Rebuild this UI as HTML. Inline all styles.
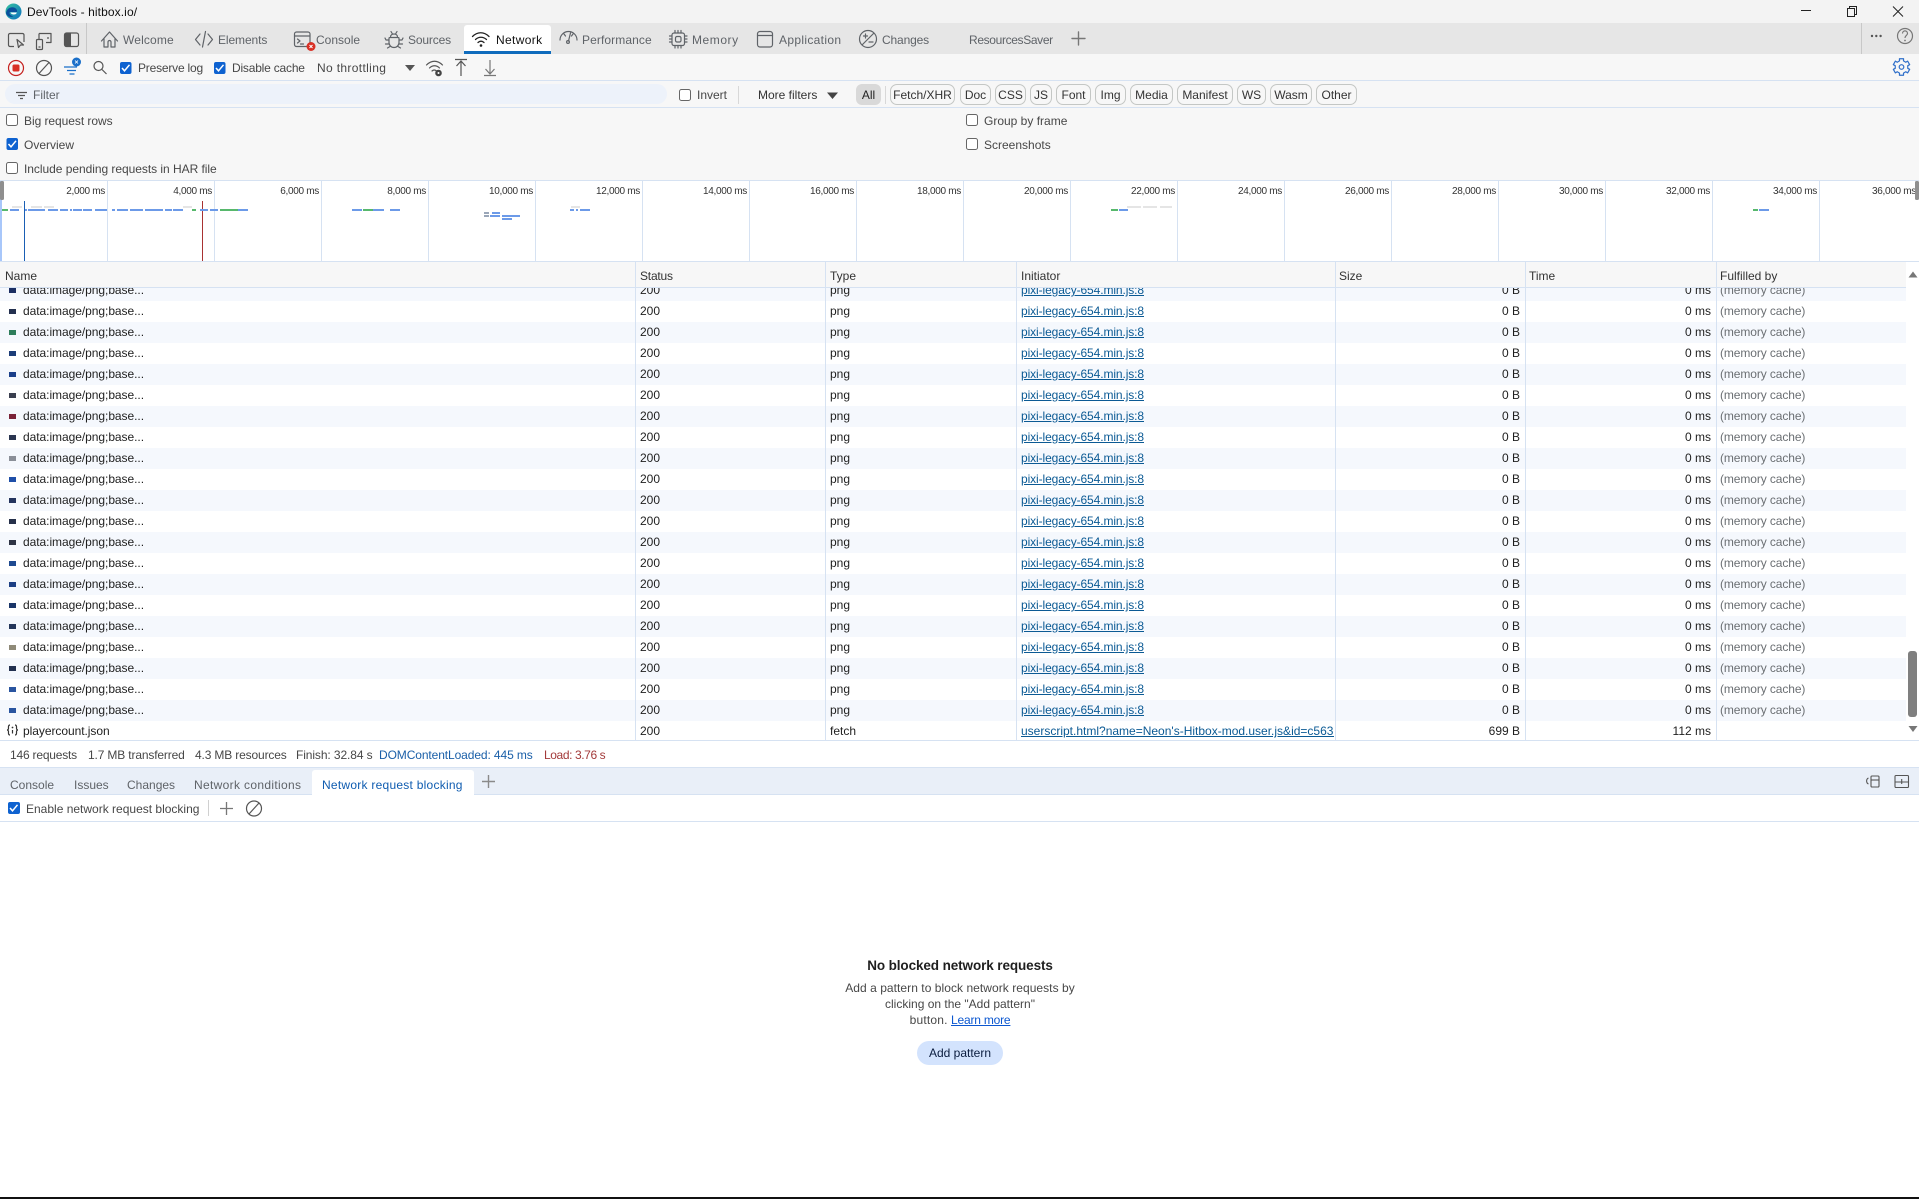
<!DOCTYPE html>
<html><head><meta charset="utf-8"><title>DevTools - hitbox.io/</title>
<style>
html,body{margin:0;padding:0;width:1919px;height:1199px;overflow:hidden;background:#fff}
body{position:relative;font:12px/16px "Liberation Sans",sans-serif;color:#1f1f1f}
.b{position:absolute}
.t{position:absolute;white-space:nowrap;line-height:16px;font-size:12px}
.g{color:#5f6368}.d{color:#474747}
.c{position:absolute;top:84px;height:19px;border:1px solid #c4c7c5;border-radius:7px;text-align:center;line-height:21px;color:#333;box-sizing:content-box}
#rows{position:absolute;left:0;top:288px;width:1906px;height:452px;overflow:hidden}
#in{position:absolute;left:0;top:-8px;width:1906px}
.r{position:relative;height:21px;line-height:21px;white-space:nowrap}
.r.a{background:#f5f8fd}
.r>*{position:absolute;top:0;font-style:normal;text-decoration:none;font-weight:normal}
.r i{left:9px;top:8px;width:7px;height:5px}
.r b{left:23px;letter-spacing:-.05px}
.r s{left:640px}
.r em{left:830px}
.r u{left:1021px;color:#0b5a94;text-decoration:underline;width:313px;overflow:hidden;letter-spacing:-.1px}
.r span{right:386px}
.r q{right:195px;quotes:none}
.r a{left:1720px;color:#6b6f73;letter-spacing:-.1px}
.cl{position:absolute;width:1px;background:#d6e2f2}
.o{position:absolute;top:184px;width:60px;text-align:right;font-size:10px;line-height:16px;letter-spacing:-.3px;color:#333;white-space:nowrap}
</style></head><body>
<div class="b" style="left:0;top:0;width:1919px;height:23px;background:#f3f3f3"></div>
<div class="b" style="left:0;top:23px;width:1919px;height:31px;background:#e6e6e6"></div>
<div class="b" style="left:0;top:54px;width:1919px;height:127px;background:#f7f7f7"></div>
<div class="b" style="left:464px;top:25px;width:87px;height:29px;background:#fff;border-radius:3px 3px 0 0"></div>
<div class="b" style="left:464px;top:51px;width:87px;height:3px;background:#0f6cbd"></div>
<div class="b" style="left:0;top:80px;width:1919px;height:1px;background:#d6e2f2"></div>
<div class="b" style="left:0;top:107px;width:1919px;height:1px;background:#d6e2f2"></div>
<div class="b" style="left:5px;top:84px;width:662px;height:20px;border-radius:10px;background:#edf2fa"></div>
<div class="b" style="left:0;top:180px;width:1919px;height:82px;background:#fff;border-top:1px solid #d6e2f2;border-bottom:1px solid #d6e2f2;box-sizing:border-box"></div>
<div class="b" style="left:0;top:261px;width:1906px;height:27px;background:#f7f7f7;border-bottom:1px solid #d6e2f2;border-top:1px solid #d6e2f2;box-sizing:border-box"></div>

<div class="t" style="left:27px;top:4px;color:#111;letter-spacing:.1px">DevTools - hitbox.io/</div>
<div class="t g" style="left:123px;top:32px;letter-spacing:.15px">Welcome</div>
<div class="t g" style="left:218px;top:32px;letter-spacing:-.1px">Elements</div>
<div class="t g" style="left:316px;top:32px">Console</div>
<div class="t g" style="left:408px;top:32px;letter-spacing:-.15px">Sources</div>
<div class="t" style="left:496px;top:32px;color:#111;letter-spacing:.35px">Network</div>
<div class="t g" style="left:582px;top:32px;letter-spacing:.1px">Performance</div>
<div class="t g" style="left:692px;top:32px;letter-spacing:.55px">Memory</div>
<div class="t g" style="left:779px;top:32px;letter-spacing:.33px">Application</div>
<div class="t g" style="left:882px;top:32px;letter-spacing:-.15px">Changes</div>
<div class="t g" style="left:969px;top:32px;letter-spacing:-.35px">ResourcesSaver</div>

<div class="t d" style="left:138px;top:60px;letter-spacing:-.2px">Preserve log</div>
<div class="t d" style="left:232px;top:60px;letter-spacing:-.2px">Disable cache</div>
<div class="t d" style="left:317px;top:60px;letter-spacing:.35px">No throttling</div>
<div class="t g" style="left:33px;top:87px">Filter</div>
<div class="t d" style="left:697px;top:87px">Invert</div>
<div class="t" style="left:758px;top:87px;color:#333">More filters</div>
<div class="b" style="left:856px;top:84px;width:25px;height:21px;border-radius:6px;background:#d9d9d9;text-align:center;line-height:23px;color:#222">All</div>
<div class="c" style="left:890px;width:63px">Fetch/XHR</div>
<div class="c" style="left:960px;width:29px">Doc</div>
<div class="c" style="left:995px;width:29px">CSS</div>
<div class="c" style="left:1030px;width:20px">JS</div>
<div class="c" style="left:1056px;width:33px">Font</div>
<div class="c" style="left:1095px;width:29px">Img</div>
<div class="c" style="left:1130px;width:41px">Media</div>
<div class="c" style="left:1177px;width:54px">Manifest</div>
<div class="c" style="left:1237px;width:27px">WS</div>
<div class="c" style="left:1270px;width:40px">Wasm</div>
<div class="c" style="left:1316px;width:39px">Other</div>

<div class="t d" style="left:24px;top:113px;letter-spacing:-.05px">Big request rows</div>
<div class="t d" style="left:24px;top:137px">Overview</div>
<div class="t d" style="left:24px;top:161px;letter-spacing:-.04px">Include pending requests in HAR file</div>
<div class="t d" style="left:984px;top:113px">Group by frame</div>
<div class="t d" style="left:984px;top:137px">Screenshots</div>

<div class="o" style="left:45px">2,000 ms</div><div class="o" style="left:152px">4,000 ms</div><div class="o" style="left:259px">6,000 ms</div><div class="o" style="left:366px">8,000 ms</div><div class="o" style="left:473px">10,000 ms</div><div class="o" style="left:580px">12,000 ms</div><div class="o" style="left:687px">14,000 ms</div><div class="o" style="left:794px">16,000 ms</div><div class="o" style="left:901px">18,000 ms</div><div class="o" style="left:1008px">20,000 ms</div><div class="o" style="left:1115px">22,000 ms</div><div class="o" style="left:1222px">24,000 ms</div><div class="o" style="left:1329px">26,000 ms</div><div class="o" style="left:1436px">28,000 ms</div><div class="o" style="left:1543px">30,000 ms</div><div class="o" style="left:1650px">32,000 ms</div><div class="o" style="left:1757px">34,000 ms</div><div class="o" style="left:1864px;overflow:hidden;width:55px;text-align:left;padding-left:8px;box-sizing:border-box">36,000 ms</div>

<div class="t" style="left:5px;top:268px;color:#333">Name</div>
<div class="t" style="left:640px;top:268px;color:#333;letter-spacing:-.2px">Status</div>
<div class="t" style="left:830px;top:268px;color:#333">Type</div>
<div class="t" style="left:1021px;top:268px;color:#333">Initiator</div>
<div class="t" style="left:1339px;top:268px;color:#333">Size</div>
<div class="t" style="left:1529px;top:268px;color:#333">Time</div>
<div class="t" style="left:1720px;top:268px;color:#333">Fulfilled by</div>

<div id="rows"><div id="in">
<div class="r a"><i style="background:#1c2f63"></i><b>data:image/png;base...</b><s>200</s><em>png</em><u>pixi-legacy-654.min.js:8</u><span>0 B</span><q>0 ms</q><a>(memory cache)</a></div>
<div class="r"><i style="background:#24304f"></i><b>data:image/png;base...</b><s>200</s><em>png</em><u>pixi-legacy-654.min.js:8</u><span>0 B</span><q>0 ms</q><a>(memory cache)</a></div>
<div class="r a"><i style="background:#2e7d5b"></i><b>data:image/png;base...</b><s>200</s><em>png</em><u>pixi-legacy-654.min.js:8</u><span>0 B</span><q>0 ms</q><a>(memory cache)</a></div>
<div class="r"><i style="background:#1d3d78"></i><b>data:image/png;base...</b><s>200</s><em>png</em><u>pixi-legacy-654.min.js:8</u><span>0 B</span><q>0 ms</q><a>(memory cache)</a></div>
<div class="r a"><i style="background:#1a3f8a"></i><b>data:image/png;base...</b><s>200</s><em>png</em><u>pixi-legacy-654.min.js:8</u><span>0 B</span><q>0 ms</q><a>(memory cache)</a></div>
<div class="r"><i style="background:#3a3f4f"></i><b>data:image/png;base...</b><s>200</s><em>png</em><u>pixi-legacy-654.min.js:8</u><span>0 B</span><q>0 ms</q><a>(memory cache)</a></div>
<div class="r a"><i style="background:#7a2238"></i><b>data:image/png;base...</b><s>200</s><em>png</em><u>pixi-legacy-654.min.js:8</u><span>0 B</span><q>0 ms</q><a>(memory cache)</a></div>
<div class="r"><i style="background:#2a3550"></i><b>data:image/png;base...</b><s>200</s><em>png</em><u>pixi-legacy-654.min.js:8</u><span>0 B</span><q>0 ms</q><a>(memory cache)</a></div>
<div class="r a"><i style="background:#8a8f98"></i><b>data:image/png;base...</b><s>200</s><em>png</em><u>pixi-legacy-654.min.js:8</u><span>0 B</span><q>0 ms</q><a>(memory cache)</a></div>
<div class="r"><i style="background:#1f4fa8"></i><b>data:image/png;base...</b><s>200</s><em>png</em><u>pixi-legacy-654.min.js:8</u><span>0 B</span><q>0 ms</q><a>(memory cache)</a></div>
<div class="r a"><i style="background:#24345e"></i><b>data:image/png;base...</b><s>200</s><em>png</em><u>pixi-legacy-654.min.js:8</u><span>0 B</span><q>0 ms</q><a>(memory cache)</a></div>
<div class="r"><i style="background:#26304a"></i><b>data:image/png;base...</b><s>200</s><em>png</em><u>pixi-legacy-654.min.js:8</u><span>0 B</span><q>0 ms</q><a>(memory cache)</a></div>
<div class="r a"><i style="background:#2d3344"></i><b>data:image/png;base...</b><s>200</s><em>png</em><u>pixi-legacy-654.min.js:8</u><span>0 B</span><q>0 ms</q><a>(memory cache)</a></div>
<div class="r"><i style="background:#1f4a90"></i><b>data:image/png;base...</b><s>200</s><em>png</em><u>pixi-legacy-654.min.js:8</u><span>0 B</span><q>0 ms</q><a>(memory cache)</a></div>
<div class="r a"><i style="background:#1c3f84"></i><b>data:image/png;base...</b><s>200</s><em>png</em><u>pixi-legacy-654.min.js:8</u><span>0 B</span><q>0 ms</q><a>(memory cache)</a></div>
<div class="r"><i style="background:#1a3568"></i><b>data:image/png;base...</b><s>200</s><em>png</em><u>pixi-legacy-654.min.js:8</u><span>0 B</span><q>0 ms</q><a>(memory cache)</a></div>
<div class="r a"><i style="background:#24365a"></i><b>data:image/png;base...</b><s>200</s><em>png</em><u>pixi-legacy-654.min.js:8</u><span>0 B</span><q>0 ms</q><a>(memory cache)</a></div>
<div class="r"><i style="background:#8f8a78"></i><b>data:image/png;base...</b><s>200</s><em>png</em><u>pixi-legacy-654.min.js:8</u><span>0 B</span><q>0 ms</q><a>(memory cache)</a></div>
<div class="r a"><i style="background:#22304f"></i><b>data:image/png;base...</b><s>200</s><em>png</em><u>pixi-legacy-654.min.js:8</u><span>0 B</span><q>0 ms</q><a>(memory cache)</a></div>
<div class="r"><i style="background:#2a55a0"></i><b>data:image/png;base...</b><s>200</s><em>png</em><u>pixi-legacy-654.min.js:8</u><span>0 B</span><q>0 ms</q><a>(memory cache)</a></div>
<div class="r a"><i style="background:#2a55a0"></i><b>data:image/png;base...</b><s>200</s><em>png</em><u>pixi-legacy-654.min.js:8</u><span>0 B</span><q>0 ms</q><a>(memory cache)</a></div>
<div class="r"><b style="left:23px">playercount.json</b><s>200</s><em>fetch</em><u style="letter-spacing:0">userscript.html?name=Neon's-Hitbox-mod.user.js&amp;id=c5636f2e-1a8b-4d</u><span>699 B</span><q>112 ms</q></div>
</div>
<div class="cl" style="left:635px;top:0;height:452px"></div><div class="cl" style="left:825px;top:0;height:452px"></div><div class="cl" style="left:1016px;top:0;height:452px"></div><div class="cl" style="left:1335px;top:0;height:452px"></div><div class="cl" style="left:1525px;top:0;height:452px"></div><div class="cl" style="left:1716px;top:0;height:452px"></div>
</div>
<div class="cl" style="left:635px;top:262px;height:26px"></div><div class="cl" style="left:825px;top:262px;height:26px"></div><div class="cl" style="left:1016px;top:262px;height:26px"></div><div class="cl" style="left:1335px;top:262px;height:26px"></div><div class="cl" style="left:1525px;top:262px;height:26px"></div><div class="cl" style="left:1716px;top:262px;height:26px"></div>
<div class="b" style="left:1908px;top:651px;width:9px;height:66px;background:#7f7f7f;border-radius:3px"></div>

<div class="b" style="left:0;top:740px;width:1919px;height:1px;background:#d6e2f2"></div>
<div class="t d" style="left:10px;top:747px;letter-spacing:-.2px">146 requests</div>
<div class="t d" style="left:88px;top:747px;letter-spacing:-.15px">1.7 MB transferred</div>
<div class="t d" style="left:195px;top:747px;letter-spacing:-.15px">4.3 MB resources</div>
<div class="t d" style="left:296px;top:747px;letter-spacing:-.1px">Finish: 32.84 s</div>
<div class="t" style="left:379px;top:747px;color:#1a5fa8;letter-spacing:-.1px">DOMContentLoaded: 445 ms</div>
<div class="t" style="left:544px;top:747px;color:#a33a3a;letter-spacing:-.4px">Load: 3.76 s</div>

<div class="b" style="left:0;top:767px;width:1919px;height:28px;background:#e9eff8;border-top:1px solid #d6e2f2;border-bottom:1px solid #d6e2f2;box-sizing:border-box"></div>
<div class="b" style="left:312px;top:770px;width:162px;height:26px;background:#fff;border-radius:3px 3px 0 0"></div>
<div class="t g" style="left:10px;top:777px">Console</div>
<div class="t g" style="left:74px;top:777px">Issues</div>
<div class="t g" style="left:127px;top:777px">Changes</div>
<div class="t g" style="left:194px;top:777px;letter-spacing:.33px">Network conditions</div>
<div class="t" style="left:322px;top:777px;color:#0f5cb0;letter-spacing:.25px">Network request blocking</div>
<div class="t d" style="left:26px;top:801px">Enable network request blocking</div>
<div class="b" style="left:0;top:821px;width:1919px;height:1px;background:#d6e2f2"></div>
<div class="b" style="left:208px;top:800px;width:1px;height:16px;background:#d0d0d0"></div>

<div class="t" style="left:760px;width:400px;top:958px;text-align:center;font-size:13.5px;font-weight:bold;letter-spacing:-.1px;color:#1f1f1f">No blocked network requests</div>
<div class="t" style="left:760px;width:400px;top:980px;text-align:center;color:#474747;letter-spacing:.05px">Add a pattern to block network requests by</div>
<div class="t" style="left:760px;width:400px;top:996px;text-align:center;color:#474747">clicking on the "Add pattern"</div>
<div class="t" style="left:760px;width:400px;top:1012px;text-align:center;color:#474747"><span style="letter-spacing:.2px">button.</span> <span style="color:#0b57d0;text-decoration:underline;letter-spacing:-.2px">Learn more</span></div>
<div class="b" style="left:917px;top:1041px;width:86px;height:24px;border-radius:12px;background:#d3e3fd;text-align:center;line-height:24px;color:#0a1c3e">Add pattern</div>
<div class="b" style="left:0;top:1197px;width:1919px;height:2px;background:#111"></div>

<svg class="b" style="left:0;top:0" width="1919" height="1199" viewBox="0 0 1919 1199" fill="none">
<defs><linearGradient id="e1" x1="0" y1="0" x2="1" y2="1"><stop offset="0" stop-color="#36c3a0"/><stop offset="1" stop-color="#0d6fc0"/></linearGradient></defs>
<!-- edge logo -->
<circle cx="13.5" cy="11.5" r="8" fill="url(#e1)"/>
<path d="M6 13c1-5 5-6.5 8-5.5 2.500.8 3.500 3 3 4.500h-6.500c-2 0-1 3.500 3 4.500-4 1.500-7-1-7.500-3.500z" fill="#0b4f9c"/>
<path d="M10.500 12.500h6.300c-.3 1.500-1.500 2-3 2s-3-.8-3.300-2z" fill="#fff"/>
<!-- window controls -->
<g stroke="#222" stroke-width="1"><path d="M1801 10.500h10"/><rect x="1847.500" y="8.500" width="7" height="8"/><path d="M1849.500 8.500v-2h7v8h-2"/><path d="M1893 6.500l10 10M1903 6.500l-10 10"/></g>
<!-- separators -->
<path d="M86.500 23v31M1861.500 23v31" stroke="#c8c8c8"/>
<path d="M738.500 86v18M885.500 86v18" stroke="#d8d8d8"/>
<!-- dock icons -->
<g stroke="#555" stroke-width="1.200" stroke-linejoin="round">
<path d="M14 46.500H10a1.500 1.500 0 0 1-1.500-1.500v-10A1.500 1.500 0 0 1 10 33.500h12.500A1.500 1.500 0 0 1 24 35v7"/><path d="M17 39.500l1.500 8 2-2.500 3 0z" fill="#e6e6e6"/>
<rect x="36.500" y="39.500" width="6" height="10" rx="1"/><path d="M39 33.500h12v9h-5M38.500 47h2"/><path d="M39 39v-5.500M47 38h2"/>
<rect x="64.500" y="33" width="14" height="13.500" rx="2"/></g>
<path d="M66 33h5v13.500h-5a1.500 1.500 0 0 1-1.500-1.500V34.500A1.500 1.500 0 0 1 66 33z" fill="#555"/>
<!-- tab icons -->
<g stroke="#5f6368" stroke-width="1.200" stroke-linejoin="round" stroke-linecap="round">
<path d="M101.500 41l8-9 8 9M104 38.500v8.500h4v-5a1.500 1.500 0 0 1 3 0v5h4v-8.500"/>
<path d="M200 34l-4.500 5.500L200 45M208 34l4.500 5.500L208 45M205.500 31.500l-3 15.500"/>
<rect x="294.500" y="32" width="15.500" height="14.500" rx="2"/><path d="M294.500 36h15.500M297.500 39l2.500 2-2.500 2M300.500 44h3"/>
<path d="M390 37.500h8a1 1 0 0 1 1 1v4a5 5 0 0 1-10 0v-4a1 1 0 0 1 1-1zM390.500 37c0-4 7-4 7 0M391 31.500l1.500 2.500M397 31.500l-1.500 2.500M389 40h-3l-1-2M399 40h3l1-2M389 44h-3.500M399 44h3.500M390 46.500l-2.500 1.500M398 46.500l2.500 1.500"/>
<path d="M560 40a8.500 8.500 0 0 1 17 0M568.500 41l2-8M564 34l1.500 2M573 34l-1.500 2"/><circle cx="568" cy="42" r="1.400"/>
<rect x="672" y="33" width="12.500" height="12.500" rx="2"/><rect x="675.500" y="36.500" width="5.500" height="5.500" rx="1.500"/><path d="M675 30.500v2.500M678 30.500v2.500M681 30.500v2.500M675 45.500v2.500M678 45.500v2.500M681 45.500v2.500M669.500 36h2.500M669.500 39h2.500M669.500 42h2.500M684.500 36h2.500M684.500 39h2.500M684.500 42h2.500"/>
<rect x="757.500" y="31.500" width="15" height="15.500" rx="2.500"/><path d="M757.500 35.500h15"/>
<circle cx="868" cy="39" r="8.500"/><path d="M862.500 44.500l11-11M863.500 36h4M865.500 34v4M869 42h4"/>
<path d="M1078.500 32v13M1072 38.500h13" stroke="#777" stroke-width="1.400"/>
</g>
<g fill="#555"><circle cx="1872" cy="36" r="1.200"/><circle cx="1876.300" cy="36" r="1.200"/><circle cx="1880.600" cy="36" r="1.200"/></g>
<circle cx="1905" cy="36" r="7.500" stroke="#777" stroke-width="1.200"/><path d="M1902.500 33.500c0-3.500 5-3.500 5 0 0 2-2.500 2-2.500 4.500" stroke="#777" stroke-width="1.200"/><circle cx="1905" cy="40.500" r=".9" fill="#777"/>
<!-- network wifi -->
<g stroke="#222" stroke-width="1.300" stroke-linecap="round"><path d="M472.500 36.500c5-5 11.500-5 16.500 0M475.500 39.500c3.300-3 7.500-3 11 0M478 42.500c2-1.800 4-1.800 6 0"/></g><circle cx="481" cy="45.500" r="1.300" fill="#222"/>
<circle cx="311" cy="46.500" r="4.500" fill="#d93025"/><path d="M309.500 45l3 3M312.500 45l-3 3" stroke="#fff"/>
<!-- toolbar -->
<circle cx="16" cy="68" r="7.500" stroke="#c5221f" stroke-width="1.200"/><rect x="12.500" y="64.500" width="7" height="7" rx="1.500" fill="#d93025"/>
<circle cx="44" cy="68" r="7.500" stroke="#555" stroke-width="1.200"/><path d="M39 73.500l10-11" stroke="#555" stroke-width="1.200"/>
<path d="M64 67h13M67 70.500h9M69.500 74h5" stroke="#1a6fc9" stroke-width="1.300"/><circle cx="76.500" cy="62" r="4.500" fill="#1a6fc9"/><path d="M75 60.500l3 3M78 60.500l-3 3" stroke="#fff" stroke-width=".8"/>
<circle cx="98.500" cy="66" r="4.500" stroke="#555" stroke-width="1.200"/><path d="M102 69.500l4.500 4.500" stroke="#555" stroke-width="1.200"/>
<path d="M405 65h10l-5 6z" fill="#555"/>
<g stroke="#555" stroke-width="1.200" stroke-linecap="round"><path d="M426.500 65c5-5 11-5 16 0M429.500 68c3-3 7-3 10 0M432 71c1.500-1.300 3-1.300 4.500 0"/></g><circle cx="438.500" cy="73" r="3.300" fill="#444"/><circle cx="438.500" cy="73" r="1" fill="#fff"/>
<path d="M455 59.500h12M461 61v15M456.500 66l4.500-5 4.500 5" stroke="#555" stroke-width="1.200"/>
<path d="M484 75.500h12M490 60v14M485.500 69l4.500 5 4.500-5" stroke="#777" stroke-width="1.200"/>
<!-- settings gear -->
<g transform="translate(1901.500 67)" stroke="#2f6fc9" stroke-width="1.200" stroke-linejoin="round"><path d="M-2.060-8.250L2.060-8.250 1.980-6.090 4.280-4.760 6.110-5.900 8.170-2.340 6.260-1.330 6.260 1.330 8.170 2.340 6.110 5.900 4.280 4.760 1.980 6.090 2.060 8.250-2.060 8.250-1.980 6.090-4.280 4.760-6.110 5.900-8.170 2.340-6.260 1.330-6.260-1.330-8.170-2.340-6.110-5.900-4.280-4.760-1.980-6.090Z"/><circle r="2.300"/></g>
<path d="M16 92.500h11M18 95.500h7M20 98.500h3" stroke="#555" stroke-width="1.200"/>
<path d="M827 92.500h11l-5.500 6.500z" fill="#444"/>
<!-- checkboxes -->
<g fill="#0e62d0"><rect x="120" y="62" width="11.500" height="12" rx="2"/><rect x="214" y="62" width="11.500" height="12" rx="2"/><rect x="6.500" y="138" width="11.500" height="12" rx="2"/><rect x="8" y="802" width="12" height="12" rx="2"/></g>
<g stroke="#fff" stroke-width="1.500"><path d="M122 68l2.500 2.800 5-6"/><path d="M216 68l2.500 2.800 5-6"/><path d="M8.500 144l2.500 2.800 5-6"/><path d="M10 808l2.500 2.800 5-6"/></g>
<g fill="#fff" stroke="#666"><rect x="679.500" y="89.500" width="11" height="11" rx="2"/><rect x="6.500" y="114.500" width="11" height="11" rx="2"/><rect x="6.500" y="162.500" width="11" height="11" rx="2"/><rect x="966.500" y="114.500" width="11" height="11" rx="2"/><rect x="966.500" y="138.500" width="11" height="11" rx="2"/></g>
<!-- overview grid -->
<g stroke="#d6e2f2"><path d="M107.500 181v80M214.500 181v80M321.500 181v80M428.500 181v80M535.500 181v80M642.500 181v80M749.500 181v80M856.500 181v80M963.500 181v80M1070.500 181v80M1177.500 181v80M1284.500 181v80M1391.500 181v80M1498.500 181v80M1605.500 181v80M1712.500 181v80M1819.500 181v80"/></g>
<rect x="0" y="181" width="2" height="80" fill="#a8c7fa"/>
<rect x="0" y="181" width="4" height="19" rx="1.500" fill="#8f8f8f"/><rect x="1915" y="181" width="4" height="19" rx="1.500" fill="#8f8f8f"/>
<path d="M24.500 201v60" stroke="#1a5fb4"/><path d="M202.500 201v60" stroke="#a83232"/>
<g stroke-width="2" stroke="#6c9ae8"><path d="M10 210h9M25 210h2M28 210h17M48 210h10M60 210h8M70 210h2M73 210h9M83 210h9M95 210h12M112 210h3M117 210h11M130 210h13M145 210h18M165 210h7M173 210h10M200 210h8M210 210h8M238 210h10M352 210h10M373 210h11M390 210h10M570 210h4M576 210h2M580 210h10M1119 210h9M1759 210h10M492 213h8M490 216h10M502 216h18M502 219h10"/></g>
<g stroke-width="2" stroke="#57b86c"><path d="M2 210h6M192 210h4M220 210h18M363 210h10M1111 210h7M1753 210h5"/></g>
<g stroke-width="2" stroke="#e5e5e5"><path d="M12 207h10M31 207h11M44 207h10M183 207h9M571 207h9M1127 207h14M1143 207h14M1160 207h12"/></g>
<g stroke-width="2" stroke="#9aa6b8"><path d="M484 213h5M484 216h5"/></g>
<!-- scrollbar -->
<path d="M1908.500 277.500l4.500-6 4.500 6z" fill="#777"/>
<path d="M1908.500 726l4.500 6 4.500-6z" fill="#777"/>
<!-- playercount icon -->
<g stroke="#333" stroke-width="1.200"><path d="M10 725c-2 0-1.500 2.500-1.500 3.500s-1 1.500-1.500 1.500c.5 0 1.500.5 1.500 1.500s-.5 3.500 1.500 3.500M15 725c2 0 1.500 2.500 1.500 3.500s1 1.500 1.500 1.500c-.5 0-1.500.5-1.500 1.500s.5 3.500-1.500 3.500"/></g>
<circle cx="12.500" cy="727.500" r=".9" fill="#333"/><path d="M12.500 730v3.500" stroke="#333" stroke-width="1.200"/>
<!-- drawer -->
<path d="M488.500 775v13M482 781.500h13" stroke="#8a8a8a" stroke-width="1.400"/>
<path d="M226.500 802v13M220 808.500h13" stroke="#777" stroke-width="1.300"/>
<circle cx="254" cy="808.500" r="7.500" stroke="#555" stroke-width="1.200"/><path d="M249 814l10-11" stroke="#555" stroke-width="1.200"/>
<g stroke="#555" stroke-width="1.100"><path d="M1868.500 778c-2.500 1-2.500 5 0 6"/><rect x="1871" y="776" width="8" height="11" rx="1"/><path d="M1871 780h8"/><rect x="1895" y="775.500" width="13.500" height="12" rx="1"/><path d="M1895 782h13.500M1901.700 779v5"/></g>
</svg>
</body></html>
